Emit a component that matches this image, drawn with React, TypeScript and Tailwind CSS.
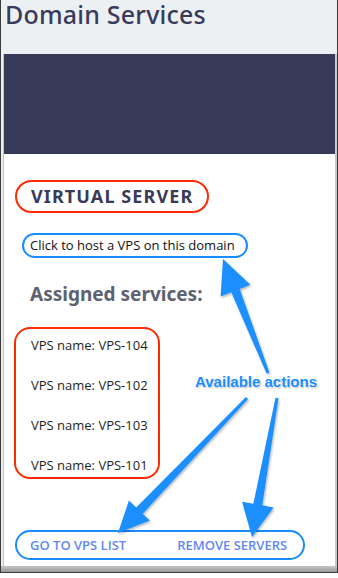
type Pt = [number, number];

const arrows: { tail: Pt; tip: Pt; head: number; width: number }[] = [
  { tail: [268, 373], tip: [223, 259], head: 34, width: 32 },
  { tail: [247, 398], tip: [118, 533], head: 31, width: 29 },
  { tail: [277, 398], tip: [252, 537], head: 33, width: 32 },
];

function arrowPoints(tail: Pt, tip: Pt, head: number, width: number) {
  const dx = tip[0] - tail[0];
  const dy = tip[1] - tail[1];
  const len = Math.hypot(dx, dy);
  const ux = dx / len;
  const uy = dy / len;
  const nx = -uy;
  const ny = ux;
  const bx = tip[0] - ux * head;
  const by = tip[1] - uy * head;
  const neck = 9;
  const end = 1.5;
  const pts: Pt[] = [
    [tail[0] + nx * end, tail[1] + ny * end],
    [bx + nx * neck / 2, by + ny * neck / 2],
    [bx + nx * width / 2, by + ny * width / 2],
    tip,
    [bx - nx * width / 2, by - ny * width / 2],
    [bx - nx * neck / 2, by - ny * neck / 2],
    [tail[0] - nx * end, tail[1] - ny * end],
  ];
  return pts.map((p) => `${p[0].toFixed(1)},${p[1].toFixed(1)}`).join(" ");
}

const services = ["VPS-104", "VPS-102", "VPS-103", "VPS-101"];

export default function App() {
  return (
    <div className="relative h-[578px] w-[338px] overflow-hidden bg-white">
      <div className="flex h-[573px] flex-col border-x border-b border-[#3b3b3b] bg-[#edf0f3]">
        <div className="h-[54px] shrink-0 pl-[4px] pt-[1px]">
          <h1 className="font-['Noto_Sans',sans-serif] text-[25px] font-medium leading-[27px] tracking-[0.2px] text-[#383b5a]">
            Domain Services
          </h1>
        </div>

        <div className="flex flex-1 flex-col pl-[2px]">
          <div className="flex flex-1 flex-col border-l border-r-2 border-l-[#c4c4c4] border-r-[#c9c9c9]">
            <div className="h-[100px] shrink-0 bg-[#373a58]" />

            <div className="flex flex-1 flex-col bg-white px-[9px] pt-[26px] font-['Open_Sans',sans-serif]">
              <div className="ml-[2px] self-start rounded-full border-2 border-[#ff2a00] px-[14px] py-[3px] font-['Noto_Sans',sans-serif] text-[18px] font-bold leading-[23px] tracking-[1.1px] text-[#383b5a]">
                VIRTUAL SERVER
              </div>

              <div className="ml-[9px] mt-[20px] self-start rounded-full border-2 border-[#1a8cff] pl-[6px] pr-[11px] text-[13px] leading-[21px] text-[#111]">
                Click to host a VPS on this domain
              </div>

              <h2 className="ml-[17px] mt-[23px] font-['Noto_Sans',sans-serif] text-[19px] font-bold leading-[26px] text-[#5d6270]">
                Assigned services:
              </h2>

              <div className="ml-[1px] mt-[20px] flex w-[146px] flex-col gap-[19px] rounded-[16px] border-2 border-[#ff2a00] pb-[1px] pl-[15px] pt-[6px]">
                {services.map((s) => (
                  <div key={s} className="text-[13px] leading-[21px] text-[#1e1e1e]">
                    VPS name: {s}
                  </div>
                ))}
              </div>

              <div className="ml-[2px] mt-[51px] flex w-[290px] items-center gap-[51px] rounded-full border-2 border-[#1a8cff] py-[3px] pl-[13px] text-[13px] font-semibold leading-[20px] text-[#6188ef]">
                <span>GO TO VPS LIST</span>
                <span>REMOVE SERVERS</span>
              </div>
            </div>
          </div>
        </div>

        <div className="h-[6px] shrink-0 bg-gradient-to-b from-[#c4c4c4] to-[#9a9a9a]" />
      </div>

      <svg className="pointer-events-none absolute inset-0" width={338} height={578}>
        <defs>
          <filter id="shadow" x="-20%" y="-20%" width="140%" height="140%">
            <feDropShadow dx="1" dy="1.5" stdDeviation="1.2" floodColor="#000" floodOpacity="0.3" />
          </filter>
        </defs>
        {arrows.map((a, i) => (
          <polygon
            key={i}
            points={arrowPoints(a.tail, a.tip, a.head, a.width)}
            fill="#1e8fff"
            filter="url(#shadow)"
          />
        ))}
      </svg>

      <div className="absolute left-[195px] top-[373px] font-['Liberation_Sans',sans-serif] text-[15px] font-bold leading-[18px] text-[#1a8cff] [text-shadow:0_0_2px_#fff,0_0_2px_#fff,1px_1px_2px_rgba(0,0,0,0.35)]">
        Available actions
      </div>
    </div>
  );
}
